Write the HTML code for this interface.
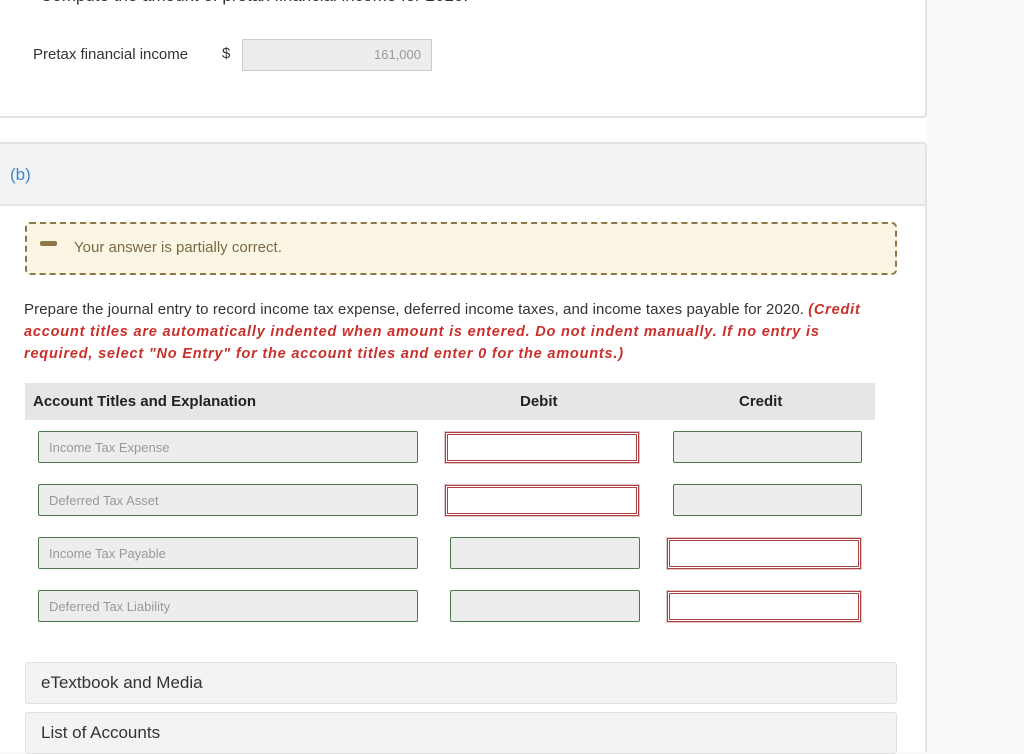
<!DOCTYPE html>
<html><head><style>
body{margin:0;width:1024px;height:743px;overflow:hidden;background:#f9f9f9;font-family:"Liberation Sans",sans-serif;position:relative}
.a{position:absolute;box-sizing:border-box}
.g{background:#ededed;border:1px solid #4a7a4a;border-radius:2px}
.r{background:#fff;border:1px solid #a84444;box-shadow:0 0 0 1px #e7c4c4,inset 0 0 0 1px #fff,inset 0 0 0 2px #a84444}
.ph{font-size:13px;color:#999;padding:8px 10px}
</style></head><body>
<div class="a" style="left:0;top:0;width:927px;height:743px;background:#fff"></div>
<div class="a" style="left:0;top:-10px;width:927px;height:128px;background:#fff;border:2px solid #e3e3e3;border-left:none;border-top:none;border-radius:0 0 4px 0"></div>
<div class="a" style="left:40px;top:-14px;font-size:17px;color:#333">Compute the amount of pretax financial income for 2020.</div>
<div class="a" style="left:33px;top:46px;font-size:15px;color:#333">Pretax financial income</div>
<div class="a" style="left:222px;top:45px;font-size:15px;color:#333">$</div>
<div class="a" style="left:242px;top:39px;width:190px;height:32px;background:#ededed;border:1px solid #ccc;font-size:13px;color:#999;text-align:right;padding:7px 10px">161,000</div>
<div class="a" style="left:0;top:142px;width:927px;height:610px;background:#fff;border:2px solid #e3e3e3;border-left:none;border-bottom:none;border-radius:0 4px 0 0"></div>
<div class="a" style="left:0;top:144px;width:925px;height:62px;background:#f3f3f3;border-bottom:2px solid #e3e3e3"></div>
<div class="a" style="left:10px;top:165px;font-size:17px;color:#3a87d0">(b)</div>
<div class="a" style="left:25px;top:222px;width:872px;height:53px;background:#fbf6e3;border:2px dashed #8d7648;border-radius:5px"></div>
<div class="a" style="left:40px;top:241px;width:17px;height:5px;background:#8d7648;border-radius:2px"></div>
<div class="a" style="left:74px;top:239px;font-size:15px;color:#7a6a45">Your answer is partially correct.</div>
<div class="a" style="left:24px;top:299px;width:900px;font-size:15px;line-height:21px;color:#333;white-space:nowrap"><span style="letter-spacing:0.1px">Prepare the journal entry to record income tax expense, deferred income taxes, and income taxes payable for 2020.</span> <b style="color:#c9302c;font-style:italic;font-size:14.5px;letter-spacing:0.8px">(Credit<br>account titles are automatically indented when amount is entered. Do not indent manually. If no entry is<br>required, select "No Entry" for the account titles and enter 0 for the amounts.)</b></div>
<div class="a" style="left:25px;top:383px;width:850px;height:37px;background:#e6e6e6;font-size:15px;font-weight:bold;color:#222">
<span class="a" style="left:8px;top:10px">Account Titles and Explanation</span>
<span class="a" style="left:495px;top:10px">Debit</span>
<span class="a" style="left:714px;top:10px">Credit</span></div>
<div class="a g ph" style="left:38px;top:431px;width:380px;height:32px">Income Tax Expense</div>
<div class="a r" style="left:445px;top:432px;width:194px;height:31px"></div>
<div class="a g" style="left:673px;top:431px;width:189px;height:32px"></div>
<div class="a g ph" style="left:38px;top:484px;width:380px;height:32px">Deferred Tax Asset</div>
<div class="a r" style="left:445px;top:485px;width:194px;height:31px"></div>
<div class="a g" style="left:673px;top:484px;width:189px;height:32px"></div>
<div class="a g ph" style="left:38px;top:537px;width:380px;height:32px">Income Tax Payable</div>
<div class="a g" style="left:450px;top:537px;width:190px;height:32px"></div>
<div class="a r" style="left:667px;top:538px;width:194px;height:31px"></div>
<div class="a g ph" style="left:38px;top:590px;width:380px;height:32px">Deferred Tax Liability</div>
<div class="a g" style="left:450px;top:590px;width:190px;height:32px"></div>
<div class="a r" style="left:667px;top:591px;width:194px;height:31px"></div>
<div class="a" style="left:25px;top:662px;width:872px;height:42px;background:#f3f3f3;border:1px solid #e0e0e0;border-radius:3px;font-size:17px;color:#333;padding:10px 15px">eTextbook and Media</div>
<div class="a" style="left:25px;top:712px;width:872px;height:42px;background:#f3f3f3;border:1px solid #e0e0e0;border-radius:3px;font-size:17px;color:#333;padding:10px 15px">List of Accounts</div>
</body></html>
